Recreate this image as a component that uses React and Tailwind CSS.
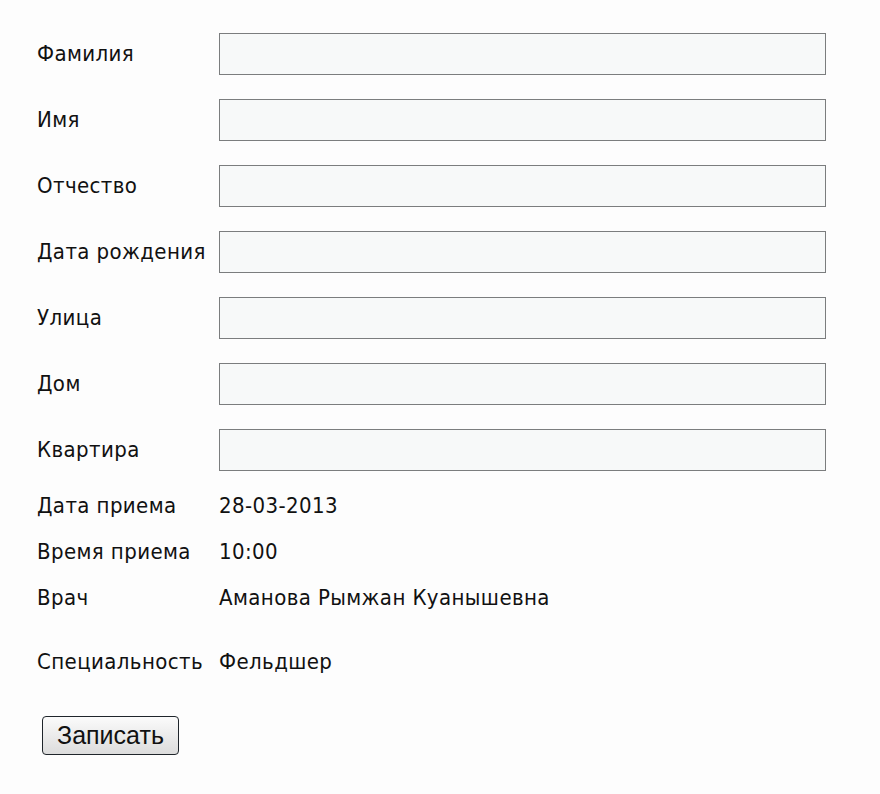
const fields = ['Фамилия', 'Имя', 'Отчество', 'Дата рождения', 'Улица', 'Дом', 'Квартира'];

const info = [
    { label: 'Дата приема', value: '28-03-2013' },
    { label: 'Время приема', value: '10:00' },
    { label: 'Врач', value: 'Аманова Рымжан Куанышевна' },
];

export default function App() {
    return (
        <div className="w-[880px] h-[794px] bg-[#fdfdfd] text-[#111] font-['DejaVu_Sans_Condensed','Liberation_Sans_Narrow',sans-serif] text-[22px] tracking-[0.4px]">
            <form className="pl-[37px] pt-[33px]" onSubmit={(e) => e.preventDefault()}>
                {fields.map((name) => (
                    <div key={name} className="flex items-center h-[42px] mb-[24px]">
                        <label className="w-[182px] shrink-0 leading-none">{name}</label>
                        <input
                            type="text"
                            className="w-[607px] h-[42px] border border-[#7b7d7e] bg-[#f7f9f9] outline-none px-2"
                        />
                    </div>
                ))}
                <div className="-mt-[13px]">
                    {info.map((row) => (
                        <div key={row.label} className="flex items-center h-[46px]">
                            <span className="w-[182px] shrink-0">{row.label}</span>
                            <span>{row.value}</span>
                        </div>
                    ))}
                    <div className="flex items-center h-[46px] mt-[18px]">
                        <span className="w-[182px] shrink-0">Специальность</span>
                        <span>Фельдшер</span>
                    </div>
                </div>
                <button
                    type="submit"
                    className="mt-[32px] ml-[5px] w-[137px] h-[39px] rounded-[4px] border border-[#1f252b] bg-gradient-to-b from-[#fbfbfb] to-[#dcdcdc] font-['Liberation_Sans',sans-serif] text-[25px] tracking-normal text-[#111] flex items-center justify-center"
                >
                    Записать
                </button>
            </form>
        </div>
    );
}
